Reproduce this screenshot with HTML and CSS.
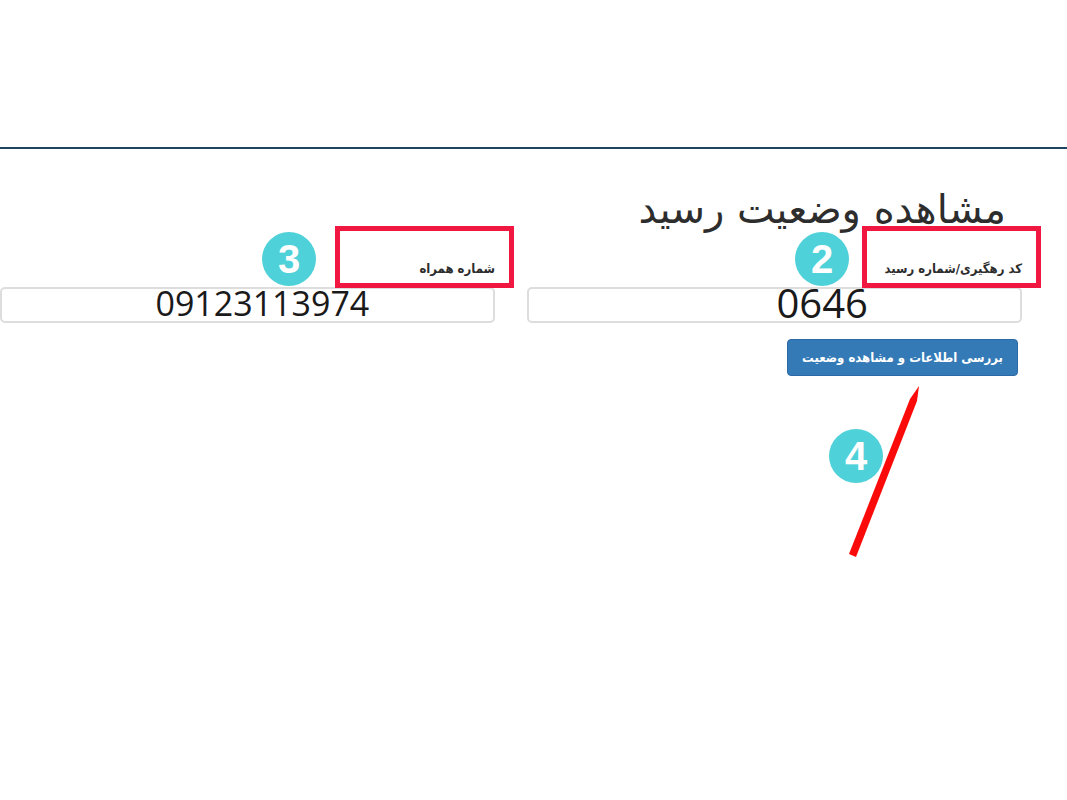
FILE: index.html
```html
<!DOCTYPE html>
<html lang="fa" dir="rtl">
<head>
  <meta charset="UTF-8">
  <meta name="viewport" content="width=device-width, initial-scale=1.0">
  <title>مشاهده وضعیت رسید</title>
  <link rel="stylesheet" href="styles.css">
</head>
<body>

  <header class="header"></header>

  <main class="content">
    <h1>مشاهده وضعیت رسید</h1>

    <form class="receipt-form">
      <div class="fields">
        <div class="field">
          <label for="code">کد رهگیری/شماره رسید</label>
          <input type="text" id="code" class="code-input" value="0646">
          <span class="highlight"></span>
          <span class="step step-code">2</span>
        </div>

        <div class="field">
          <label for="mobile">شماره همراه</label>
          <input type="text" id="mobile" class="mobile-input" value="09123113974">
          <span class="highlight"></span>
          <span class="step step-mobile">3</span>
        </div>
      </div>

      <div class="actions">
        <button type="button" class="submit-btn">بررسی اطلاعات و مشاهده وضعیت</button>
        <span class="step step-submit">4</span>
        <!-- Pointer towards the submit button -->
        <svg class="arrow" viewBox="0 0 72 172" aria-hidden="true">
          <path d="M71 0 L69 15 L8 171 L1 168 L62 13 Z" fill="#fb0a0a" />
        </svg>
      </div>
    </form>
  </main>

</body>
</html>
```

FILE: styles.css
```css
* {
  box-sizing: border-box;
}

body {
  margin: 0;
  min-height: 100vh;
  background-color: #fff;
  font-family: 'DejaVu Sans Condensed', 'DejaVu Sans', sans-serif;
  color: #2d2d2d;
}

/* Empty top area with the dark line under it */
.header {
  height: 149px;
  border-bottom: 2px solid #1d4560;
}

.content {
  padding: 36px 45px 0 0;
}

h1 {
  margin: 0 16px 0 0;
  font-family: 'DejaVu Sans', sans-serif;
  font-size: 40px;
  font-weight: normal;
  line-height: 48px;
}

.fields {
  display: grid;
  grid-template-columns: 1fr 1fr;
  gap: 32px;
  padding-top: 24px;
}

.field {
  position: relative;
}

label {
  display: block;
  height: 30px;
  font-size: 13px;
  font-weight: bold;
  line-height: 24px;
}

input {
  display: block;
  width: 100%;
  height: 36px;
  border: 2px solid #ddd;
  border-radius: 5px;
  background-color: #fff;
  color: #1a1a1a;
  font-family: 'Open Sans', sans-serif;
  line-height: 32px;
  direction: ltr;
  text-align: left;
}

.code-input {
  padding: 0 0 6px 50%;
  font-size: 40px;
}

.mobile-input {
  padding: 0 0 4px 31%;
  font-size: 34px;
}

/* Red frame around the label */
.highlight {
  position: absolute;
  top: -31px;
  right: -19px;
  width: 179px;
  height: 62px;
  border: 5px solid #f01840;
}

/* Numbered step badges */
.step {
  position: absolute;
  width: 54px;
  height: 54px;
  border-radius: 50%;
  background-color: #4fd1d9;
  color: #fff;
  font-family: 'Liberation Sans', sans-serif;
  font-size: 40px;
  font-weight: bold;
  line-height: 54px;
  text-align: center;
}

.step-code {
  top: -25px;
  right: 173px;
}

.step-mobile {
  top: -25px;
  right: 179px;
}

.actions {
  position: relative;
  min-height: 240px;
  padding: 16px 4px 0 0;
}

.submit-btn {
  height: 37px;
  padding: 0 14px;
  border: 1px solid #2b6aa6;
  border-radius: 4px;
  background-color: #337ab7;
  color: #fff;
  font-family: inherit;
  font-size: 13px;
  font-weight: bold;
}

.step-submit {
  top: 106px;
  right: 139px;
}

.arrow {
  position: absolute;
  top: 63px;
  right: 102px;
  width: 72px;
  height: 172px;
}
```
